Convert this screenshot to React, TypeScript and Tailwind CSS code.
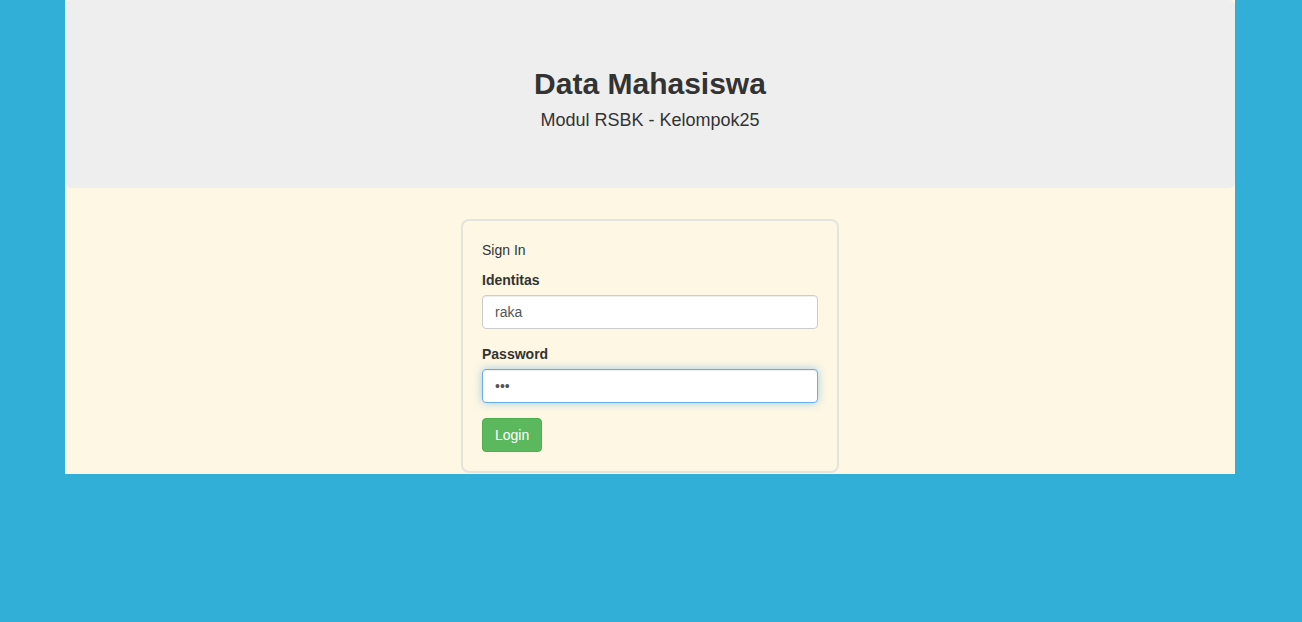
export default function App() {
  return (
    <div className="min-h-screen bg-[#31afd6] font-['Liberation_Sans',Arial,sans-serif] text-[14px] leading-[20px] text-[#333]">
      <div className="w-[1170px] ml-[65px] bg-[#fdf7e3] pb-px">
        <header className="bg-[#eeeeee] rounded-[6px] h-[188px] text-center pt-[67px]">
          <h1 className="text-[30px] leading-[33px] font-bold">Data Mahasiswa</h1>
          <p className="text-[18px] leading-[26px] mt-[7px]">Modul RSBK - Kelompok25</p>
        </header>

        <main className="flex justify-center pt-[31px]">
          <form
            className="w-[378px] border-2 border-[#e4e3df] rounded-[8px] px-[19px] pt-[19px] pb-[19px]"
            onSubmit={(e) => e.preventDefault()}
          >
            <p className="mb-[10px]">Sign In</p>

            <div className="mb-[15px]">
              <label className="block font-bold mb-[5px]">Identitas</label>
              <input
                type="text"
                defaultValue="raka"
                className="block w-full h-[34px] px-[12px] bg-white border border-[#ccc] rounded-[4px] text-[#555] text-[14px] shadow-[inset_0_1px_1px_rgba(0,0,0,0.075)] outline-none"
              />
            </div>

            <div className="mb-[15px]">
              <label className="block font-bold mb-[5px]">Password</label>
              <input
                type="password"
                defaultValue="abc"
                className="block w-full h-[34px] px-[12px] bg-white border border-[#66afe9] rounded-[4px] text-[#555] text-[14px] shadow-[inset_0_1px_1px_rgba(0,0,0,0.075),0_0_8px_rgba(102,175,233,0.6)] outline-none"
              />
            </div>

            <button
              type="submit"
              className="h-[34px] px-[12px] bg-[#5cb85c] border border-[#4cae4c] rounded-[4px] text-white text-[14px]"
            >
              Login
            </button>
          </form>
        </main>
      </div>
    </div>
  );
}
